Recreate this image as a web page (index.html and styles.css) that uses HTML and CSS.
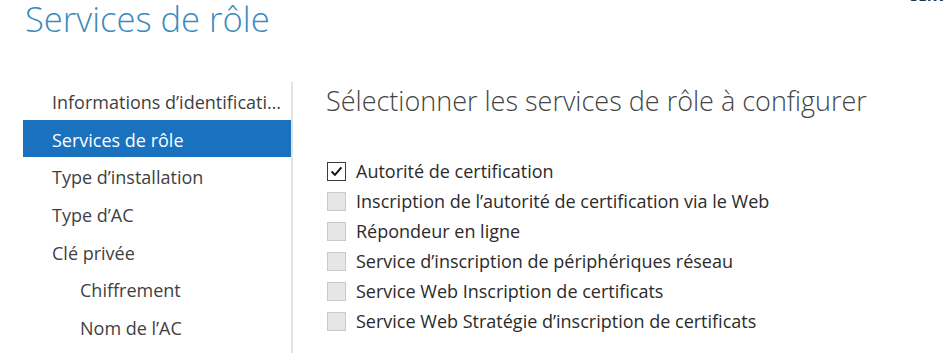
FILE: index.html
```html
<!DOCTYPE html>
<html lang="fr">
<head>
    <meta charset="UTF-8">
    <meta name="viewport" content="width=device-width, initial-scale=1.0">
    <title>Services de rôle</title>
    <link rel="stylesheet" href="styles.css">
</head>
<body>
    <!-- En-tête -->
    <div class="wizard-header">
        <h1 class="wizard-title">Services de rôle</h1>
        <div class="target-server">SERVEUR DE DESTINATION</div>
    </div>

    <div class="wizard-body">
        <!-- Étapes -->
        <div class="steps">
            <div class="step">Informations d’identification</div>
            <div class="step active">Services de rôle</div>
            <div class="step">Type d’installation</div>
            <div class="step">Type d’AC</div>
            <div class="step">Clé privée</div>
            <div class="step sub">Chiffrement</div>
            <div class="step sub">Nom de l’AC</div>
        </div>

        <!-- Contenu -->
        <div class="content">
            <h2 class="content-title">Sélectionner les services de rôle à configurer</h2>
            <div class="role-list">
                <label class="role">
                    <span class="box checked">
                        <svg viewBox="0 0 19 19" width="17" height="17"><path d="M4 9.5 L7.8 13.3 L15 5" fill="none" stroke="#111" stroke-width="2.2"/></svg>
                    </span>
                    Autorité de certification
                </label>
                <label class="role"><span class="box"></span>Inscription de l’autorité de certification via le Web</label>
                <label class="role"><span class="box"></span>Répondeur en ligne</label>
                <label class="role"><span class="box"></span>Service d’inscription de périphériques réseau</label>
                <label class="role"><span class="box"></span>Service Web Inscription de certificats</label>
                <label class="role"><span class="box"></span>Service Web Stratégie d’inscription de certificats</label>
            </div>
        </div>
    </div>
</body>
</html>
```

FILE: styles.css
```css
html, body {
    overflow: hidden;
}

body {
    margin: 0;
    background: #FFFFFF;
    font-family: 'Open Sans', 'Noto Sans', sans-serif;
    color: #333;
    height: 353px;
}

.wizard-header {
    display: flex;
    justify-content: space-between;
    height: 82px;
}

.wizard-title {
    margin: -3px 0 0 25px;
    font-size: 34.6px;
    font-weight: 300;
    line-height: 44px;
    color: #3a8bbd;
}

.target-server {
    width: 34px;
    margin-top: -15px;
    font-size: 15px;
    font-weight: 700;
    color: #23324a;
    white-space: nowrap;
    overflow: hidden;
}

.wizard-body {
    display: flex;
    height: 271px;
}

.steps {
    width: 268px;
    margin-left: 23px;
}

.step {
    height: 37.7px;
    line-height: 40.5px;
    padding: 0 6px 0 29px;
    font-size: 18px;
    color: #3f3f3f;
    white-space: nowrap;
    overflow: hidden;
    text-overflow: ellipsis;
}

.step.sub {
    padding-left: 57px;
}

.step.active {
    background: #1a71bd;
    color: #FFFFFF;
}

.content {
    border-left: 2px solid #e2e2e2;
    padding-left: 33px;
    flex: 1;
}

.content-title {
    margin: 0;
    padding-top: 2px;
    font-size: 27px;
    font-weight: 300;
    line-height: 34px;
    color: #444;
}

.role-list {
    display: flex;
    flex-direction: column;
    margin-top: 38px;
}

.role {
    display: flex;
    align-items: center;
    gap: 10px;
    height: 30px;
    margin-left: 1px;
    font-size: 18px;
    color: #2b2b2b;
}

.box {
    width: 17px;
    height: 17px;
    border: 1px solid #c9c9c9;
    background: #e6e6e6;
    display: flex;
    align-items: center;
    justify-content: center;
}

.box.checked {
    background: #FFFFFF;
    border-color: #3a3a3a;
}
```
